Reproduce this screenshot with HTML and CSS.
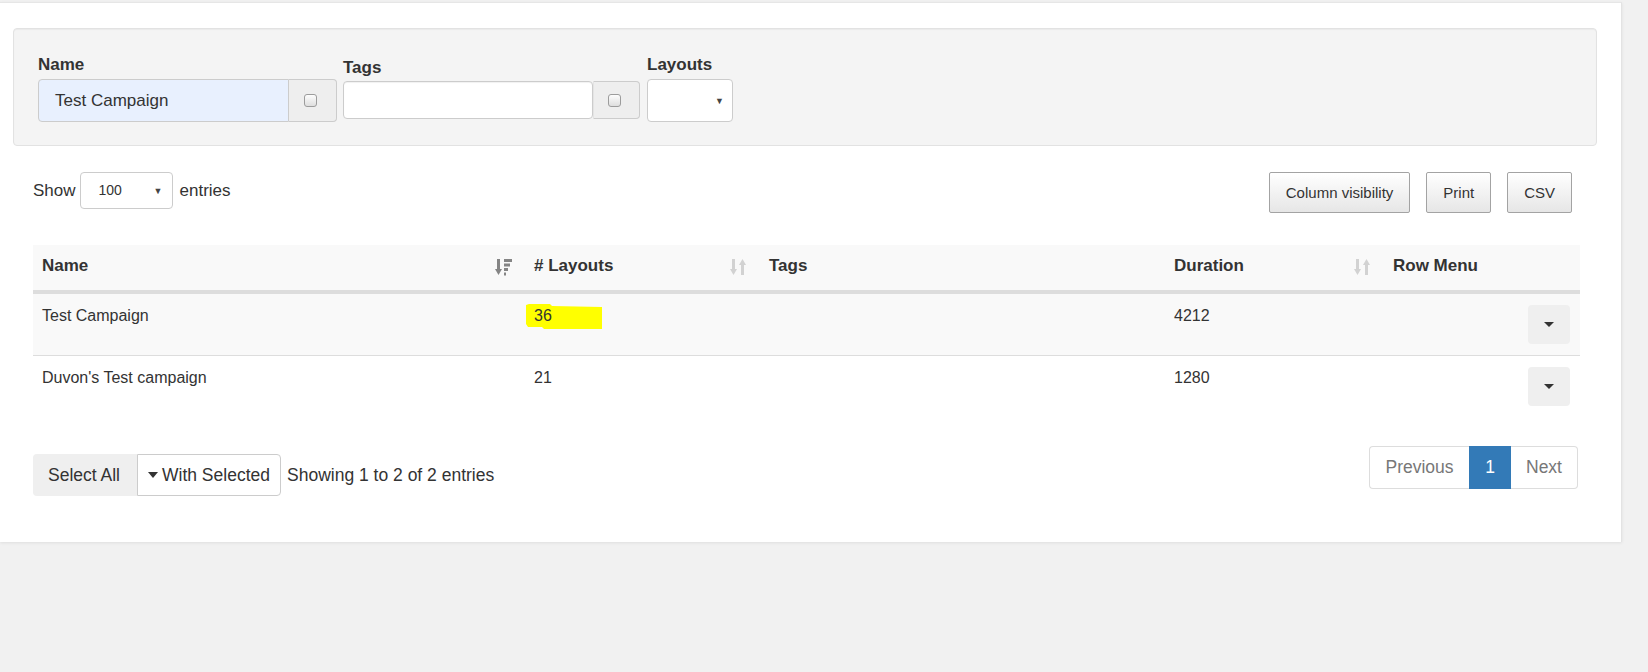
FILE: index.html
```html
<!DOCTYPE html>
<html>
<head>
<meta charset="utf-8">
<title>Campaigns</title>
<link rel="stylesheet" href="styles.css">
</head>
<body>
<div class="page">
  <div class="well">
    <div class="fg">
      <label class="lbl">Name</label>
      <div class="ig">
        <div class="inp inp-name">Test Campaign</div>
        <div class="addon"><span class="cb"></span></div>
      </div>
    </div>
    <div class="fg fg-tags">
      <label class="lbl">Tags</label>
      <div class="ig ig-tags">
        <div class="inp inp-tags"></div>
        <div class="addon addon-tags"><span class="cb"></span></div>
      </div>
    </div>
    <div class="fg fg-layouts">
      <label class="lbl">Layouts</label>
      <div class="sel sel-layouts"><span class="arr">&#9660;</span></div>
    </div>
  </div>

  <div class="dt">
    <div class="dt-top">
      <div class="len">
        <span>Show</span>
        <div class="sel sel-len"><span class="len-val">100</span><span class="arr">&#9660;</span></div>
        <span>entries</span>
      </div>
      <div class="btns">
        <button class="dtb">Column visibility</button>
        <button class="dtb">Print</button>
        <button class="dtb">CSV</button>
      </div>
    </div>

    <table class="grid">
      <colgroup>
        <col class="c-name"><col class="c-lay"><col class="c-tags"><col class="c-dur"><col class="c-menu">
      </colgroup>
      <thead>
        <tr>
          <th>Name
            <svg class="sort sort-desc" viewBox="0 0 18 18" width="18" height="18"><rect x="2" y="1" width="3" height="11"/><polygon points="0,11 7,11 3.5,17"/><rect x="9" y="1" width="8" height="3"/><rect x="9" y="5.5" width="6" height="3"/><rect x="9" y="10" width="4" height="3"/><rect x="9" y="14.5" width="2" height="3"/></svg>
          </th>
          <th># Layouts
            <svg class="sort sort-none" viewBox="0 0 18 18" width="18" height="18"><rect x="2" y="1" width="3" height="11"/><polygon points="0,11 7,11 3.5,17"/><polygon points="9,7 16,7 12.5,1"/><rect x="11" y="6" width="3" height="11"/></svg>
          </th>
          <th>Tags</th>
          <th>Duration
            <svg class="sort sort-none" viewBox="0 0 18 18" width="18" height="18"><rect x="2" y="1" width="3" height="11"/><polygon points="0,11 7,11 3.5,17"/><polygon points="9,7 16,7 12.5,1"/><rect x="11" y="6" width="3" height="11"/></svg>
          </th>
          <th>Row Menu</th>
        </tr>
      </thead>
      <tbody>
        <tr class="odd">
          <td>Test Campaign</td>
          <td><span class="hl">36</span></td>
          <td></td>
          <td>4212</td>
          <td class="menu"><span class="rowbtn"><span class="caret"></span></span></td>
        </tr>
        <tr>
          <td>Duvon's Test campaign</td>
          <td>21</td>
          <td></td>
          <td>1280</td>
          <td class="menu"><span class="rowbtn"><span class="caret"></span></span></td>
        </tr>
      </tbody>
    </table>

    <div class="dt-bottom">
      <div class="bulk">
        <div class="bgroup">
          <span class="b-all">Select All</span>
          <span class="b-with"><span class="caret caret-lg"></span>With Selected</span>
        </div>
        <span class="info">Showing 1 to 2 of 2 entries</span>
      </div>
      <div class="pager">
        <span class="pg pg-prev">Previous</span>
        <span class="pg pg-cur">1</span>
        <span class="pg pg-next">Next</span>
      </div>
    </div>
  </div>
</div>
</body>
</html>
```

FILE: styles.css
```css
* { box-sizing: border-box; }

html, body {
  margin: 0;
  padding: 0;
}

body {
  background: #f1f1f1;
  font-family: "Liberation Sans", Arial, sans-serif;
  color: #333;
  width: 1648px;
  height: 672px;
  overflow: hidden;
}

.page {
  width: 1622px;
  margin-top: 2px;
  background: #fff;
  border-top: 1px solid #e6e6e6;
  border-right: 1px solid #e3e3e3;
  box-shadow: 0 1px 3px rgba(0, 0, 0, 0.08);
  padding: 25px 24px 46px 13px;
}

/* filter well */
.well {
  display: flex;
  align-items: flex-start;
  background: #f4f4f4;
  border: 1px solid #e2e2e2;
  border-radius: 4px;
  box-shadow: inset 0 1px 1px rgba(0, 0, 0, 0.04);
  padding: 26px 24px 23px;
}

.fg {
  display: flex;
  flex-direction: column;
}

.fg-tags {
  margin-left: 6px;
  padding-top: 2px;
}

.fg-tags .lbl {
  margin-top: 1px;
  margin-bottom: 3px;
}

.fg-layouts {
  margin-left: 7px;
}

.lbl {
  font-weight: bold;
  font-size: 17px;
  line-height: 20px;
  margin-bottom: 4px;
}

.ig {
  display: flex;
  height: 43px;
}

.ig-tags {
  height: 38px;
}

.inp {
  height: 100%;
  border: 1px solid #ccc;
  border-radius: 4px 0 0 4px;
  font-size: 17px;
  line-height: 41px;
  padding-left: 16px;
  background: #fff;
}

.inp-name {
  width: 251px;
  background: #e8f0fe;
}

.inp-tags {
  width: 250px;
  border-radius: 4px;
  box-shadow: inset 0 1px 1px rgba(0, 0, 0, 0.06);
}

.addon {
  width: 48px;
  height: 100%;
  background: #eee;
  border: 1px solid #ccc;
  border-left: none;
  border-radius: 0 4px 4px 0;
  display: flex;
  align-items: center;
  justify-content: center;
}

.addon-tags {
  width: 47px;
  border-left: 1px solid #e4e4e4;
}

.cb {
  width: 13px;
  height: 13px;
  border: 1px solid #9c9c9c;
  border-radius: 3px;
  background: linear-gradient(#fdfdfd, #dedede);
  margin-left: -4px;
}

.sel {
  position: relative;
  border: 1px solid #ccc;
  border-radius: 4px;
  background: #fff;
}

.sel .arr {
  position: absolute;
  top: 50%;
  transform: translateY(-50%);
  font-size: 9px;
  color: #444;
}

.sel-layouts {
  width: 86px;
  height: 43px;
}

.sel-layouts .arr {
  right: 8px;
}

/* datatable */
.dt {
  margin: 26px 17px 0 20px;
}

.dt-top {
  display: flex;
  justify-content: space-between;
  align-items: flex-start;
}

.len {
  display: flex;
  align-items: center;
  height: 37px;
  font-size: 17px;
}

.sel-len {
  width: 93px;
  height: 37px;
  margin: 0 7px 0 4px;
}

.len-val {
  font-size: 14px;
  line-height: 35px;
  padding-left: 18px;
}

.sel-len .arr {
  right: 9px;
}

.btns {
  display: flex;
  gap: 16px;
  margin-right: 8px;
}

.dtb {
  height: 41px;
  padding: 0 16px;
  font-family: "Liberation Sans", Arial, sans-serif;
  font-size: 15px;
  color: #333;
  border: 1px solid #a3a3a3;
  border-radius: 2px;
  background: linear-gradient(to bottom, #ffffff 0%, #e6e6e6 100%);
}

.grid {
  width: 100%;
  margin-top: 32px;
  table-layout: fixed;
  border-collapse: separate;
  border-spacing: 0;
}

.c-name { width: 492px; }
.c-lay { width: 235px; }
.c-tags { width: 405px; }
.c-dur { width: 219px; }
.c-menu { width: 196px; }

.grid th {
  position: relative;
  text-align: left;
  font-size: 17px;
  font-weight: bold;
  line-height: 22px;
  padding: 10px 9px 13px;
  background: #f9f9f9;
  border-bottom: 3px solid #ddd;
}

.sort {
  position: absolute;
  right: 12px;
  top: 13px;
}

.sort-desc { fill: #858585; }
.sort-none { fill: #d2d2d2; }

.grid td {
  font-size: 16px;
  line-height: 22px;
  padding: 11px 9px;
  border-top: 1px solid #ddd;
  vertical-align: top;
}

.grid tr.odd td {
  background: #f9f9f9;
}

.grid td.menu {
  text-align: right;
  padding-right: 10px;
}

.hl {
  display: inline-block;
  vertical-align: top;
  width: 76px;
  height: 25px;
  margin: -1px 0 0 -8px;
  padding: 1px 0 0 8px;
  background: #ffff00;
  clip-path: polygon(0 1px, 3px 0, 24px 0, 26px 2px, 100% 3px, 100% 100%, 18px 100%, 16px 23px, 2px 23px, 0 20px);
}

.rowbtn {
  display: inline-flex;
  align-items: center;
  justify-content: center;
  width: 42px;
  height: 39px;
  background: #efefef;
  border-radius: 4px;
  vertical-align: top;
}

.caret {
  display: inline-block;
  width: 0;
  height: 0;
  border-top: 5px solid #333;
  border-left: 5px solid transparent;
  border-right: 5px solid transparent;
}

/* bottom */
.dt-bottom {
  display: flex;
  justify-content: space-between;
  align-items: flex-start;
  margin-top: 29px;
}

.bulk {
  display: flex;
  align-items: center;
  margin-top: 8px;
  font-size: 17.5px;
}

.bgroup {
  display: flex;
  height: 42px;
}

.b-all {
  width: 104px;
  line-height: 42px;
  padding-left: 15px;
  background: #efefef;
  border-radius: 4px 0 0 4px;
}

.b-with {
  display: flex;
  align-items: center;
  width: 144px;
  padding-left: 10px;
  border: 1px solid #ccc;
  border-radius: 0 4px 4px 0;
  background: #fff;
}

.caret-lg {
  border-top-width: 6px;
  margin-right: 4px;
}

.info {
  margin-left: 6px;
}

.pager {
  display: flex;
  margin-right: 2px;
  font-size: 17.5px;
}

.pg {
  height: 43px;
  line-height: 41px;
  border: 1px solid #ddd;
  color: #777;
  text-align: center;
  background: #fff;
}

.pg-prev {
  width: 100px;
  border-radius: 4px 0 0 4px;
  border-right: none;
}

.pg-cur {
  width: 42px;
  background: #337ab7;
  border-color: #337ab7;
  color: #fff;
}

.pg-next {
  width: 67px;
  border-left: none;
  border-radius: 0 4px 4px 0;
}
```
